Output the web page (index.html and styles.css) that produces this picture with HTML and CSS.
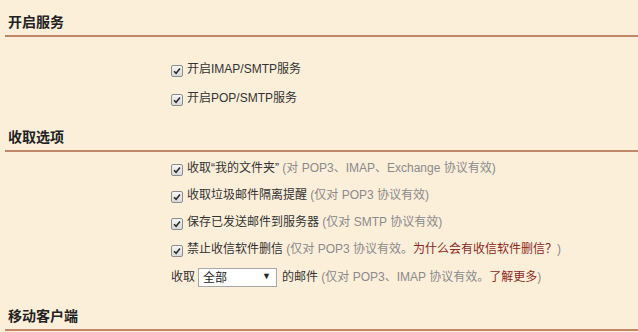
FILE: index.html
```html
<!DOCTYPE html>
<html>
<head>
    <meta charset="utf-8">
    <title>收取设置</title>
    <link rel="stylesheet" href="styles.css">
</head>
<body>
    <div class="section">
        <h2 class="section-title">开启服务</h2>
        <div class="options options-first">
            <label class="option"><span class="check"><svg viewBox="0 0 8 8" width="8" height="8"><path d="M1 4.2 L3.1 6.3 L7 1.6" fill="none" stroke="#2b2b2b" stroke-width="1.6"/></svg></span>开启IMAP/SMTP服务</label>
            <label class="option"><span class="check"><svg viewBox="0 0 8 8" width="8" height="8"><path d="M1 4.2 L3.1 6.3 L7 1.6" fill="none" stroke="#2b2b2b" stroke-width="1.6"/></svg></span>开启POP/SMTP服务</label>
        </div>
    </div>

    <div class="section">
        <h2 class="section-title">收取选项</h2>
        <div class="options">
            <label class="option"><span class="check"><svg viewBox="0 0 8 8" width="8" height="8"><path d="M1 4.2 L3.1 6.3 L7 1.6" fill="none" stroke="#2b2b2b" stroke-width="1.6"/></svg></span>收取“我的文件夹” <span class="note">(对 POP3、IMAP、Exchange 协议有效)</span></label>
            <label class="option"><span class="check"><svg viewBox="0 0 8 8" width="8" height="8"><path d="M1 4.2 L3.1 6.3 L7 1.6" fill="none" stroke="#2b2b2b" stroke-width="1.6"/></svg></span>收取垃圾邮件隔离提醒 <span class="note">(仅对 POP3 协议有效)</span></label>
            <label class="option"><span class="check"><svg viewBox="0 0 8 8" width="8" height="8"><path d="M1 4.2 L3.1 6.3 L7 1.6" fill="none" stroke="#2b2b2b" stroke-width="1.6"/></svg></span>保存已发送邮件到服务器 <span class="note">(仅对 SMTP 协议有效)</span></label>
            <label class="option"><span class="check"><svg viewBox="0 0 8 8" width="8" height="8"><path d="M1 4.2 L3.1 6.3 L7 1.6" fill="none" stroke="#2b2b2b" stroke-width="1.6"/></svg></span>禁止收信软件删信 <span class="note">(仅对 POP3 协议有效。<a href="#">为什么会有收信软件删信？</a>)</span></label>
            <div class="option option-select">收取<span class="select"><select><option>全部</option><option>最近30天</option></select></span>的邮件 <span class="note">(仅对 POP3、IMAP 协议有效。<a href="#">了解更多</a>)</span></div>
        </div>
    </div>

    <div class="section">
        <h2 class="section-title">移动客户端</h2>
    </div>
</body>
</html>
```

FILE: styles.css
```css
* {
    margin: 0;
    padding: 0;
    box-sizing: border-box;
}

body {
    font-family: "Liberation Sans", "Noto Sans CJK SC", sans-serif;
    font-size: 12px;
    color: #333;
    background: #fcefda;
    overflow: hidden;
}

.section-title {
    margin-left: 5px;
    padding: 12px 0 3px 3px;
    font-size: 14px;
    line-height: 20px;
    font-weight: bold;
    color: #222;
    border-bottom: 2px solid #c0876b;
}

.options {
    padding: 3px 0 2px 171px;
}

.options-first {
    padding-top: 18px;
}

.option {
    display: block;
    height: 27px;
    line-height: 27px;
    white-space: nowrap;
}

.options-first .option,
.option-select {
    height: 29px;
    line-height: 29px;
}

.check {
    display: inline-flex;
    align-items: center;
    justify-content: center;
    width: 12px;
    height: 12px;
    margin-right: 4px;
    vertical-align: -2px;
    border: 1px solid #8c8c8c;
    border-radius: 2px;
    background: linear-gradient(#f6f6f6, #d9d9d9);
}

.note {
    color: #8a8a8a;
}

.note a {
    color: #8b2a1e;
    text-decoration: none;
}

.select {
    position: relative;
    display: inline-block;
    margin: 0 5px 0 3px;
    vertical-align: middle;
    line-height: normal;
}

.select select {
    display: block;
    appearance: none;
    width: 79px;
    height: 19px;
    padding: 0 4px;
    font-family: inherit;
    font-size: 12px;
    color: #222;
    background: #fff;
    border: 1px solid #a8a8a8;
    border-radius: 0;
}

.select::after {
    content: "▼";
    position: absolute;
    right: 6px;
    top: 3px;
    font-size: 9px;
    color: #222;
    pointer-events: none;
}
```
